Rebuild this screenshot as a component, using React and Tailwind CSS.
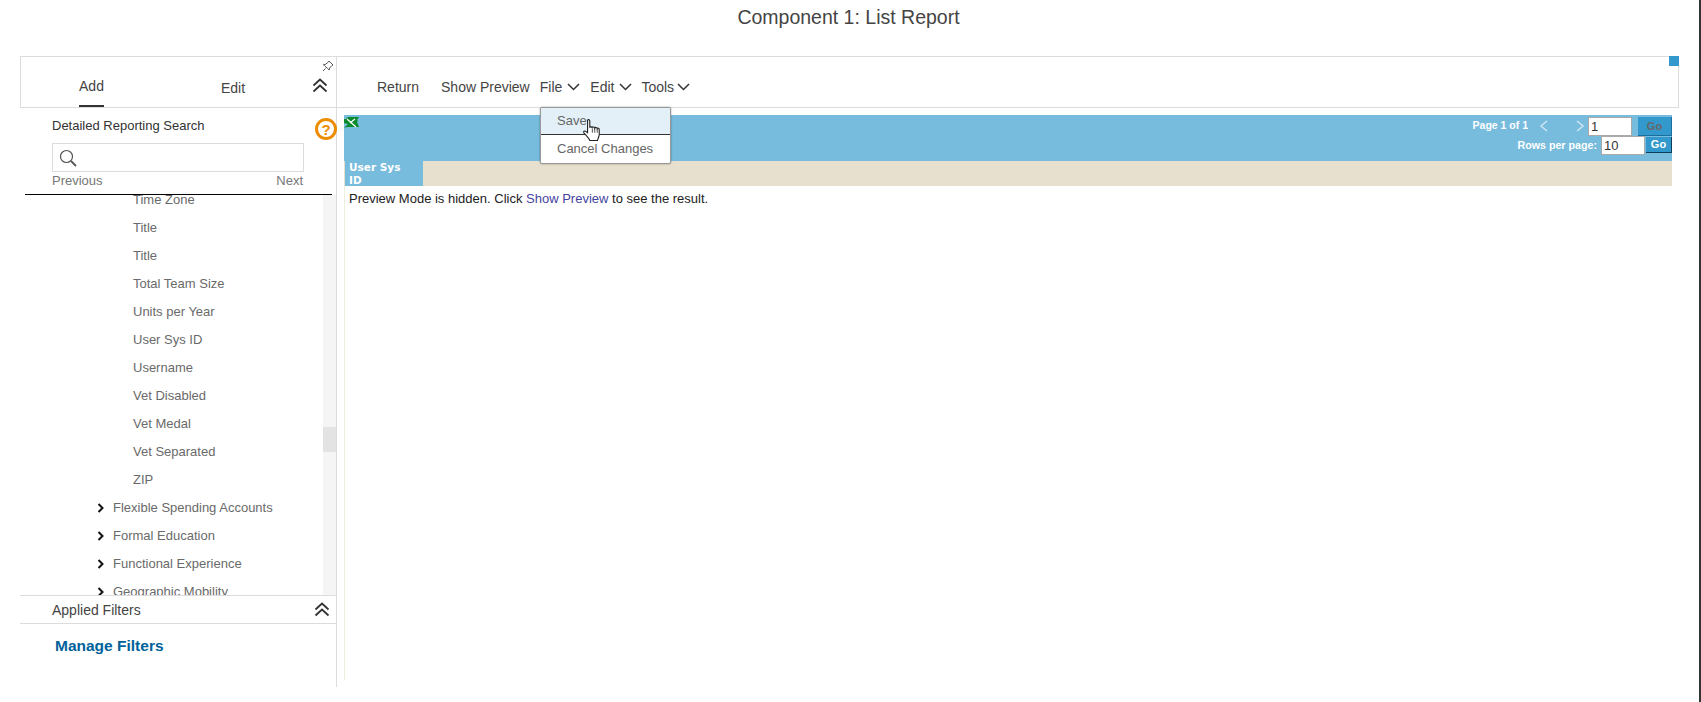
import React from "react";

const Chevs = ({ className }) => (
  <svg width="16" height="15" viewBox="0 0 16 15" fill="none" stroke="#333" strokeWidth="1.8" className={className}>
    <path d="M1.500 7.500 8 1.500l6.500 6" />
    <path d="M1.500 13.500 8 7.500l6.500 6" />
  </svg>
);
const Down = () => (
  <svg width="13" height="8" viewBox="0 0 13 8" fill="none" stroke="#333" strokeWidth="1.500">
    <path d="M1 1l5.500 5.500L12 1" />
  </svg>
);
const Right = () => (
  <svg width="7" height="10" viewBox="0 0 7 10" fill="none" stroke="#111" strokeWidth="2">
    <path d="M1.500 1l4 4-4 4" />
  </svg>
);

const leaves = ["Title", "Title", "Total Team Size", "Units per Year", "User Sys ID", "Username", "Vet Disabled", "Vet Medal", "Vet Separated", "ZIP"];
const groups = ["Flexible Spending Accounts", "Formal Education", "Functional Experience", "Geographic Mobility"];

export default function App() {
  return (
    <div className="w-[1701px] h-[702px] bg-white relative overflow-hidden font-['Liberation_Sans',Arial,sans-serif] text-[#333]">
      <div className="h-[56px] flex justify-center pt-[5px] pr-[4px] text-[19.500px] leading-[24px] text-[#444]">Component 1: List Report</div>
      <div className="flex items-stretch pl-[20px]">
        {/* left column */}
        <div className="w-[316px] h-[631px] flex flex-col">
          <div className="h-[52px] border border-[#dcdcdc] border-r-0 relative flex text-[14px] text-[#444]">
            <div className="ml-[58px] w-[25px] h-[50px] border-b-2 border-[#333] flex justify-center pt-[21px] leading-[16px]">Add</div>
            <div className="ml-[117px] pt-[23px] leading-[16px]">Edit</div>
            <svg width="12" height="12" viewBox="0 0 12 12" fill="none" stroke="#444" strokeWidth="0.9" className="absolute right-[2px] top-[3px]">
              <path d="M7 1l4 4-1 .5-2.500 2.500-.3 2-1.600-1.600L3 6.300l-1.600-1.600 2-.3L6.500 2z" />
              <path d="M3.500 8.500 1 11" />
            </svg>
            <Chevs className="absolute right-[8px] top-[21px]" />
          </div>
          <div className="h-[87px] relative">
            <div className="absolute left-[32px] top-[10px] text-[13px] leading-[16px] text-[#333]">Detailed Reporting Search</div>
            <div className="absolute left-[295px] top-[10px] w-[22px] h-[22px] rounded-full border-[3px] border-[#ec8c00] flex items-center justify-center text-[#ec8c00] text-[15px] font-bold leading-none">?</div>
            <div className="absolute left-[32px] top-[35px] w-[252px] h-[29px] border border-[#dcdcdc] flex items-center pl-[6px]">
              <svg width="18" height="18" viewBox="0 0 18 18" fill="none" stroke="#555" strokeWidth="1.200">
                <circle cx="7.500" cy="7.500" r="6" />
                <path d="M12 12l5 5" strokeWidth="1.800" />
              </svg>
            </div>
            <div className="absolute left-[32px] top-[65px] w-[252px] flex justify-between pr-[1px] text-[13px] leading-[16px] text-[#777]">
              <span>Previous</span>
              <span>Next</span>
            </div>
            <div className="absolute left-[5px] top-[86px] w-[307px] h-px bg-black" />
          </div>
          <div className="h-[400px] flex overflow-hidden">
            <div className="flex-1 overflow-hidden text-[13px] leading-[28px] text-[#6a6a6a]">
              <div className="-mt-[9.500px] pl-[113px] h-[28px]">Time Zone</div>
              {leaves.map((t, i) => (
                <div key={i} className="pl-[113px] h-[28px]">{t}</div>
              ))}
              {groups.map((t) => (
                <div key={t} className="h-[28px] flex items-center pl-[77px]">
                  <Right />
                  <span className="ml-[9px]">{t}</span>
                </div>
              ))}
            </div>
            <div className="w-[13px] bg-[#f5f5f5] pt-[232px]">
              <div className="h-[25px] bg-[#e3e3e3]" />
            </div>
          </div>
          <div className="h-[29px] border-y border-[#dcdcdc] flex items-center justify-between pl-[32px] pr-[6px] text-[14px] text-[#444]">
            <span className="pt-[1px]">Applied Filters</span>
            <Chevs />
          </div>
          <div className="pl-[35px] pt-[12px] text-[15.500px] leading-[20px] font-bold text-[#00629b]">Manage Filters</div>
        </div>
        {/* right column */}
        <div className="flex-1 flex flex-col border-l border-[#dcdcdc] h-[631px]">
          <div className="w-[1342px] h-[52px] border border-l-0 border-[#dcdcdc] relative flex items-center text-[14px] text-[#444] pt-[10px]">
            <span className="ml-[40px]">Return</span>
            <span className="ml-[22px]">Show Preview</span>
            <span className="ml-[10px]">File</span>
            <span className="ml-[5px]"><Down /></span>
            <span className="ml-[10px]">Edit</span>
            <span className="ml-[5px]"><Down /></span>
            <span className="ml-[9px]">Tools</span>
            <span className="ml-[3px]"><Down /></span>
            <div className="absolute right-[-1px] top-[-1px] w-[10px] h-[10px] bg-[#3399cc]" />
          </div>
          <div className="ml-[7px] mt-[7px] w-[1328px] h-[565px] flex flex-col">
            <div className="h-[46px] bg-[#77bbdd] relative text-white font-bold text-[10.500px]">
              <svg width="15" height="11" viewBox="0 0 15 11" className="absolute left-0 top-[2px]">
                <path d="M0 2h2L4 0h8l3 0-2 3 1 1-1 1 2 5H3l-3 1 4-4-4-1z" fill="#0a8a2a" />
                <path d="M3 2l9 8M11 2 6 6" stroke="#fff" strokeWidth="1.300" fill="none" />
              </svg>
              <div className="absolute right-0 top-[1px] flex items-center h-[20px]">
                <span>Page 1 of 1</span>
                <svg width="10" height="12" viewBox="0 0 10 12" fill="none" stroke="#cfe6f2" strokeWidth="1.500" className="ml-[11px]"><path d="M8 1 2 6l6 5" /></svg>
                <svg width="10" height="12" viewBox="0 0 10 12" fill="none" stroke="#cfe6f2" strokeWidth="1.500" className="ml-[26px]"><path d="M2 1l6 5-6 5" /></svg>
                <div className="ml-[3px] w-[44px] h-[19px] bg-white border border-[#aaa] text-[#333] font-normal text-[13px] leading-[17px] pl-[2px]">1</div>
                <div className="ml-[6px] w-[34px] h-[19px] bg-[#3399cc] border-b border-r border-[#1c6f9c] text-[#666] text-[11px] leading-[18px] text-center">Go</div>
              </div>
              <div className="absolute right-0 top-[21px] flex items-center h-[18px]">
                <span className="text-[10.700px]">Rows per page:</span>
                <div className="ml-[4px] w-[44px] h-[19px] bg-white border border-[#aaa] text-[#333] font-normal text-[13px] leading-[17px] pl-[2px]">10</div>
                <div className="ml-[1px] w-[26px] h-[16px] bg-[#3399cc] border-b border-r border-[#0d3f5c] text-white text-[11px] leading-[15px] text-center">Go</div>
              </div>
            </div>
            <div className="h-[25px] bg-[#e8e0cf] pl-px">
              <div className="w-[78px] h-full bg-[#77bbdd] text-white font-bold text-[10.500px] leading-[13px] pl-[4px] font-['DejaVu_Sans',sans-serif]">User Sys<br />ID</div>
            </div>
            <div className="flex-1 border-l border-[#eeeedd] pl-[4px] pt-[6px] text-[13px] leading-[14px] text-[#222]">
              Preview Mode is hidden. Click <span className="text-[#44449e]">Show Preview</span> to see the result.
            </div>
          </div>
        </div>
      </div>
      {/* dropdown */}
      <div className="absolute left-[540px] top-[107px] w-[131px] h-[57px] bg-white border border-[#999] rounded-[2px] shadow-[0_0_2px_rgba(0,0,0,0.4)] text-[13px] text-[#666]">
        <div className="h-[27px] bg-[#e3f0f8] border-b border-[#333] pl-[16px] leading-[26px]">Save</div>
        <div className="pl-[16px] leading-[27px]">Cancel Changes</div>
      </div>
      {/* mouse cursor */}
      <svg width="20" height="25" viewBox="0 0 18 22" className="absolute left-[582px] top-[118px]" fill="#fff" stroke="#222" strokeWidth="1">
        <path d="M5 1.500c1-.7 2 0 2 1V8.500c.2-1 2-1 2.300 0 .2-1 2-1 2.200.3.300-.8 2-.8 2.200.4.300-.5 1.800-.4 1.800.8v4.500c0 2-1 3-1.500 5.500H7c-.5-2-2.500-4-5-6.500-1-1-.5-2 .5-2 1 0 1.500 1 2.500 1.500z" />
        <path d="M9.300 9v4M11.500 9v4M13.700 9.500V13" strokeWidth="0.700" />
      </svg>
      <div className="absolute right-0 top-0 w-[2px] h-[702px] bg-[#333]" />
    </div>
  );
}
